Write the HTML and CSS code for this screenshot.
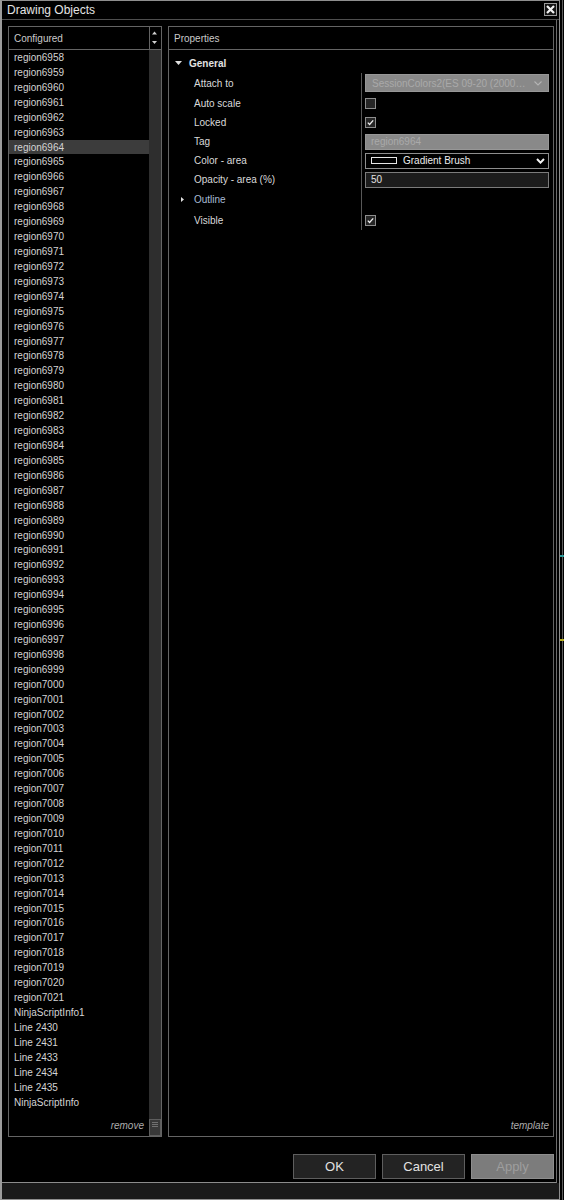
FILE: index.html
```html
<!DOCTYPE html>
<html>
<head>
<meta charset="utf-8">
<title>Drawing Objects</title>
<link rel="stylesheet" href="styles.css">
</head>
<body>
<div class="window">
  <div class="titlebar">
    <span class="title">Drawing Objects</span>
    <span class="close"><svg width="11" height="11" viewBox="0 0 11 11"><path d="M2 2 L9 9 M9 2 L2 9" stroke="#f2f2f2" stroke-width="2.2" fill="none"/></svg></span>
  </div>
  <div class="content">
    <div class="panels">
      <div class="panel list-panel">
        <div class="panel-header">
          <span class="hdr-label">Configured</span>
          <span class="hdr-arrows"><svg width="11" height="22" viewBox="0 0 11 22"><polygon points="2,7.5 7,7.5 4.5,4.5" fill="#d0d0d0"/><polygon points="2,14 7,14 4.5,17" fill="#d0d0d0"/></svg></span>
        </div>
        <div class="list-body">
          <div class="items">
            <div class="item">region6958</div>
            <div class="item">region6959</div>
            <div class="item">region6960</div>
            <div class="item">region6961</div>
            <div class="item">region6962</div>
            <div class="item">region6963</div>
            <div class="item selected">region6964</div>
            <div class="item">region6965</div>
            <div class="item">region6966</div>
            <div class="item">region6967</div>
            <div class="item">region6968</div>
            <div class="item">region6969</div>
            <div class="item">region6970</div>
            <div class="item">region6971</div>
            <div class="item">region6972</div>
            <div class="item">region6973</div>
            <div class="item">region6974</div>
            <div class="item">region6975</div>
            <div class="item">region6976</div>
            <div class="item">region6977</div>
            <div class="item">region6978</div>
            <div class="item">region6979</div>
            <div class="item">region6980</div>
            <div class="item">region6981</div>
            <div class="item">region6982</div>
            <div class="item">region6983</div>
            <div class="item">region6984</div>
            <div class="item">region6985</div>
            <div class="item">region6986</div>
            <div class="item">region6987</div>
            <div class="item">region6988</div>
            <div class="item">region6989</div>
            <div class="item">region6990</div>
            <div class="item">region6991</div>
            <div class="item">region6992</div>
            <div class="item">region6993</div>
            <div class="item">region6994</div>
            <div class="item">region6995</div>
            <div class="item">region6996</div>
            <div class="item">region6997</div>
            <div class="item">region6998</div>
            <div class="item">region6999</div>
            <div class="item">region7000</div>
            <div class="item">region7001</div>
            <div class="item">region7002</div>
            <div class="item">region7003</div>
            <div class="item">region7004</div>
            <div class="item">region7005</div>
            <div class="item">region7006</div>
            <div class="item">region7007</div>
            <div class="item">region7008</div>
            <div class="item">region7009</div>
            <div class="item">region7010</div>
            <div class="item">region7011</div>
            <div class="item">region7012</div>
            <div class="item">region7013</div>
            <div class="item">region7014</div>
            <div class="item">region7015</div>
            <div class="item">region7016</div>
            <div class="item">region7017</div>
            <div class="item">region7018</div>
            <div class="item">region7019</div>
            <div class="item">region7020</div>
            <div class="item">region7021</div>
            <div class="item">NinjaScriptInfo1</div>
            <div class="item">Line 2430</div>
            <div class="item">Line 2431</div>
            <div class="item">Line 2433</div>
            <div class="item">Line 2434</div>
            <div class="item">Line 2435</div>
            <div class="item">NinjaScriptInfo</div>
            <div class="foot-link">remove</div>
          </div>
          <div class="scrollbar">
            <div class="thumb"><span></span><span></span><span></span></div>
          </div>
        </div>
      </div>
      <div class="panel props-panel">
        <div class="panel-header">
          <span class="hdr-label">Properties</span>
        </div>
        <div class="props-body">
          <div class="group-row">
            <svg class="tri-down" width="7" height="4" viewBox="0 0 7 4"><polygon points="0,0 7,0 3.5,4" fill="#e0e0e0"/></svg>
            <span class="group-name">General</span>
          </div>
          <div class="prop h20">
            <div class="label">Attach to</div>
            <div class="value">
              <div class="combo disabled">
                <span class="combo-text">SessionColors2(ES 09-20 (2000…</span>
                <svg class="chev" width="8" height="5" viewBox="0 0 8 5"><polyline points="0.5,0.5 4,4 7.5,0.5" stroke="#b4b4b4" stroke-width="1.1" fill="none"/></svg>
              </div>
            </div>
          </div>
          <div class="prop h20">
            <div class="label">Auto scale</div>
            <div class="value"><span class="check"></span></div>
          </div>
          <div class="prop h19">
            <div class="label">Locked</div>
            <div class="value"><span class="check"><svg width="9" height="9" viewBox="0 0 9 9"><polyline points="1.8,4.6 3.6,6.5 7.2,2.4" stroke="#f0f0f0" stroke-width="1.3" fill="none"/></svg></span></div>
          </div>
          <div class="prop h19">
            <div class="label">Tag</div>
            <div class="value"><div class="textbox disabled">region6964</div></div>
          </div>
          <div class="prop h19">
            <div class="label">Color - area</div>
            <div class="value">
              <div class="combo brush">
                <span class="swatch"></span>
                <span class="combo-text">Gradient Brush</span>
                <svg class="chev" width="9" height="6" viewBox="0 0 9 6"><polyline points="1,1 4.5,4.6 8,1" stroke="#f4f4f4" stroke-width="2" fill="none"/></svg>
              </div>
            </div>
          </div>
          <div class="prop h19">
            <div class="label">Opacity - area (%)</div>
            <div class="value"><div class="textbox">50</div></div>
          </div>
          <div class="prop h21">
            <div class="label sub">
              <svg class="tri-right" width="3" height="5" viewBox="0 0 3 5"><polygon points="0,0 3,2.5 0,5" fill="#e0e0e0"/></svg>
              <span class="outline">Outline</span>
            </div>
            <div class="value"></div>
          </div>
          <div class="prop h20">
            <div class="label">Visible</div>
            <div class="value"><span class="check"><svg width="9" height="9" viewBox="0 0 9 9"><polyline points="1.8,4.6 3.6,6.5 7.2,2.4" stroke="#f0f0f0" stroke-width="1.3" fill="none"/></svg></span></div>
          </div>
          <div class="foot-link props-foot">template</div>
        </div>
      </div>
    </div>
    <div class="buttons">
      <button class="btn">OK</button>
      <button class="btn">Cancel</button>
      <button class="btn btn-disabled">Apply</button>
    </div>
  </div>
  <div class="statusbar"></div>
</div>
<div class="backdrop"></div>
</body>
</html>
```

FILE: styles.css
```css
* { box-sizing: border-box; }
html, body { margin: 0; padding: 0; }
body {
  width: 564px;
  height: 1200px;
  overflow: hidden;
  background: #000;
  display: flex;
  font-family: "Liberation Sans", Arial, sans-serif;
  font-size: 10px;
  color: #d4d4d4;
}

.window {
  width: 560px;
  height: 1200px;
  flex: none;
  border: 1px solid #8e8e8e;
  border-left: 2px solid #9c9c9c;
  background: #000;
  display: flex;
  flex-direction: column;
}

.titlebar {
  height: 19px;
  flex: none;
  border-bottom: 1px solid #4e4e4e;
  display: flex;
  align-items: center;
  justify-content: space-between;
  padding: 0 2px 1px 5px;
}
.title {
  font-size: 12px;
  color: #e4e4e4;
}
.close {
  width: 13px;
  height: 13px;
  border: 1px solid #9a9a9a;
  background: #141414;
  display: flex;
  align-items: center;
  justify-content: center;
}
.close svg { display: block; }

.content {
  flex: 1;
  margin-right: 2px;
  border-right: 1px solid #6c6c6c;
  border-bottom: 1px solid #8c8c8c;
  padding: 6px 2px 3px 6px;
  display: flex;
  flex-direction: column;
}

.panels {
  height: 1111px;
  flex: none;
  display: flex;
  gap: 6px;
}
.panel {
  border: 1px solid #646464;
  display: flex;
  flex-direction: column;
  min-height: 0;
}
.list-panel { width: 154px; flex: none; }
.props-panel { flex: 1; }

.panel-header {
  height: 23px;
  flex: none;
  border-bottom: 1px solid #646464;
  display: flex;
}
.hdr-label {
  flex: 1;
  display: flex;
  align-items: center;
  padding-left: 5px;
  color: #cacaca;
  font-size: 10px;
}
.hdr-arrows {
  width: 12px;
  border-left: 1px solid #646464;
  display: flex;
}
.hdr-arrows svg { display: block; }

.list-body {
  flex: 1;
  min-height: 0;
  display: flex;
}
.items {
  flex: 1;
  display: flex;
  flex-direction: column;
  overflow: hidden;
}
.item {
  height: 14.93px;
  line-height: 14.93px;
  flex: none;
  padding: 1px 0 0 5px;
  white-space: nowrap;
  color: #d4d4d4;
}
.item.selected { background: #3c3c3c; }

.foot-link {
  margin-top: auto;
  text-align: right;
  font-style: italic;
  color: #acacac;
  line-height: 14px;
  padding: 0 5px 3px 0;
}

.scrollbar {
  width: 12px;
  flex: none;
  background: #2e2e2e;
  display: flex;
  flex-direction: column;
  justify-content: flex-end;
}
.thumb {
  height: 17px;
  border: 1px solid #5e5e5e;
  background: #383838;
  display: flex;
  flex-direction: column;
  align-items: center;
  gap: 1px;
  padding-top: 2px;
}
.thumb span {
  width: 6px;
  height: 1px;
  background: #707070;
}

.props-body {
  flex: 1;
  display: flex;
  flex-direction: column;
  padding-top: 3px;
}
.group-row {
  height: 20px;
  display: flex;
  align-items: center;
  gap: 7px;
  padding-left: 6px;
}
.tri-down, .tri-right { display: block; flex: none; }
.group-name {
  font-weight: bold;
  color: #e2e2e2;
}

.prop {
  display: grid;
  grid-template-columns: 192px 192px;
}
.h19 { height: 19px; }
.h20 { height: 20px; }
.h21 { height: 21px; }

.label {
  display: flex;
  align-items: center;
  padding-left: 25px;
  color: #dadada;
}
.label.sub {
  padding-left: 12px;
  gap: 10px;
}
.outline { color: #a9bcd6; }

.value {
  border-left: 1px solid #585858;
  padding: 0 4px 0 3px;
  display: flex;
  align-items: center;
}

.combo {
  width: 184px;
  height: 18px;
  display: flex;
  align-items: center;
  padding: 0 6px 0 6px;
  white-space: nowrap;
}
.combo .combo-text { flex: 1; overflow: hidden; }
.combo .chev { display: block; flex: none; }
.combo.disabled {
  background: #898989;
  border: 1px solid #979797;
  color: #a9a9a9;
}
.combo.brush {
  height: 16px;
  background: #000;
  border: 1px solid #8e8e8e;
  color: #ececec;
  padding: 0 3px 0 5px;
  gap: 6px;
}
.swatch {
  width: 26px;
  height: 7px;
  border: 1px solid #e6e6e6;
  flex: none;
}

.textbox {
  width: 184px;
  height: 16px;
  border: 1px solid #7c7c7c;
  background: #1c1c1c;
  color: #e2e2e2;
  display: flex;
  align-items: center;
  padding-left: 5px;
}
.textbox.disabled {
  background: #898989;
  border-color: #979797;
  color: #aaaaaa;
}

.check {
  width: 11px;
  height: 11px;
  border: 1px solid #8e8e8e;
  background: #262626;
  display: flex;
  align-items: center;
  justify-content: center;
}
.check svg { display: block; }

.props-foot { padding-right: 4px; }

.buttons {
  margin-top: 17px;
  display: flex;
  justify-content: flex-end;
  gap: 6px;
}
.btn {
  width: 83px;
  height: 25px;
  border: 1px solid #5e5e5e;
  background: #232323;
  color: #e2e2e2;
  font-family: "Liberation Sans", Arial, sans-serif;
  font-size: 13px;
  padding: 0;
}
.btn-disabled {
  background: #7c7c7c;
  border-color: #8e8e8e;
  color: #9e9e9e;
}

.statusbar {
  height: 16px;
  flex: none;
  background: #1a1a1a;
}

.backdrop {
  flex: 1;
  height: 1200px;
  background:
    linear-gradient(to bottom, transparent 639px, #b8b020 639px, #b8b020 641px, transparent 641px),
    linear-gradient(to bottom, transparent 555px, #2a9a9a 555px, #2a9a9a 557px, transparent 557px),
    linear-gradient(to right, #000 2px, #5c5c5c 2px, #5c5c5c 3px, #000 3px);
}
```
